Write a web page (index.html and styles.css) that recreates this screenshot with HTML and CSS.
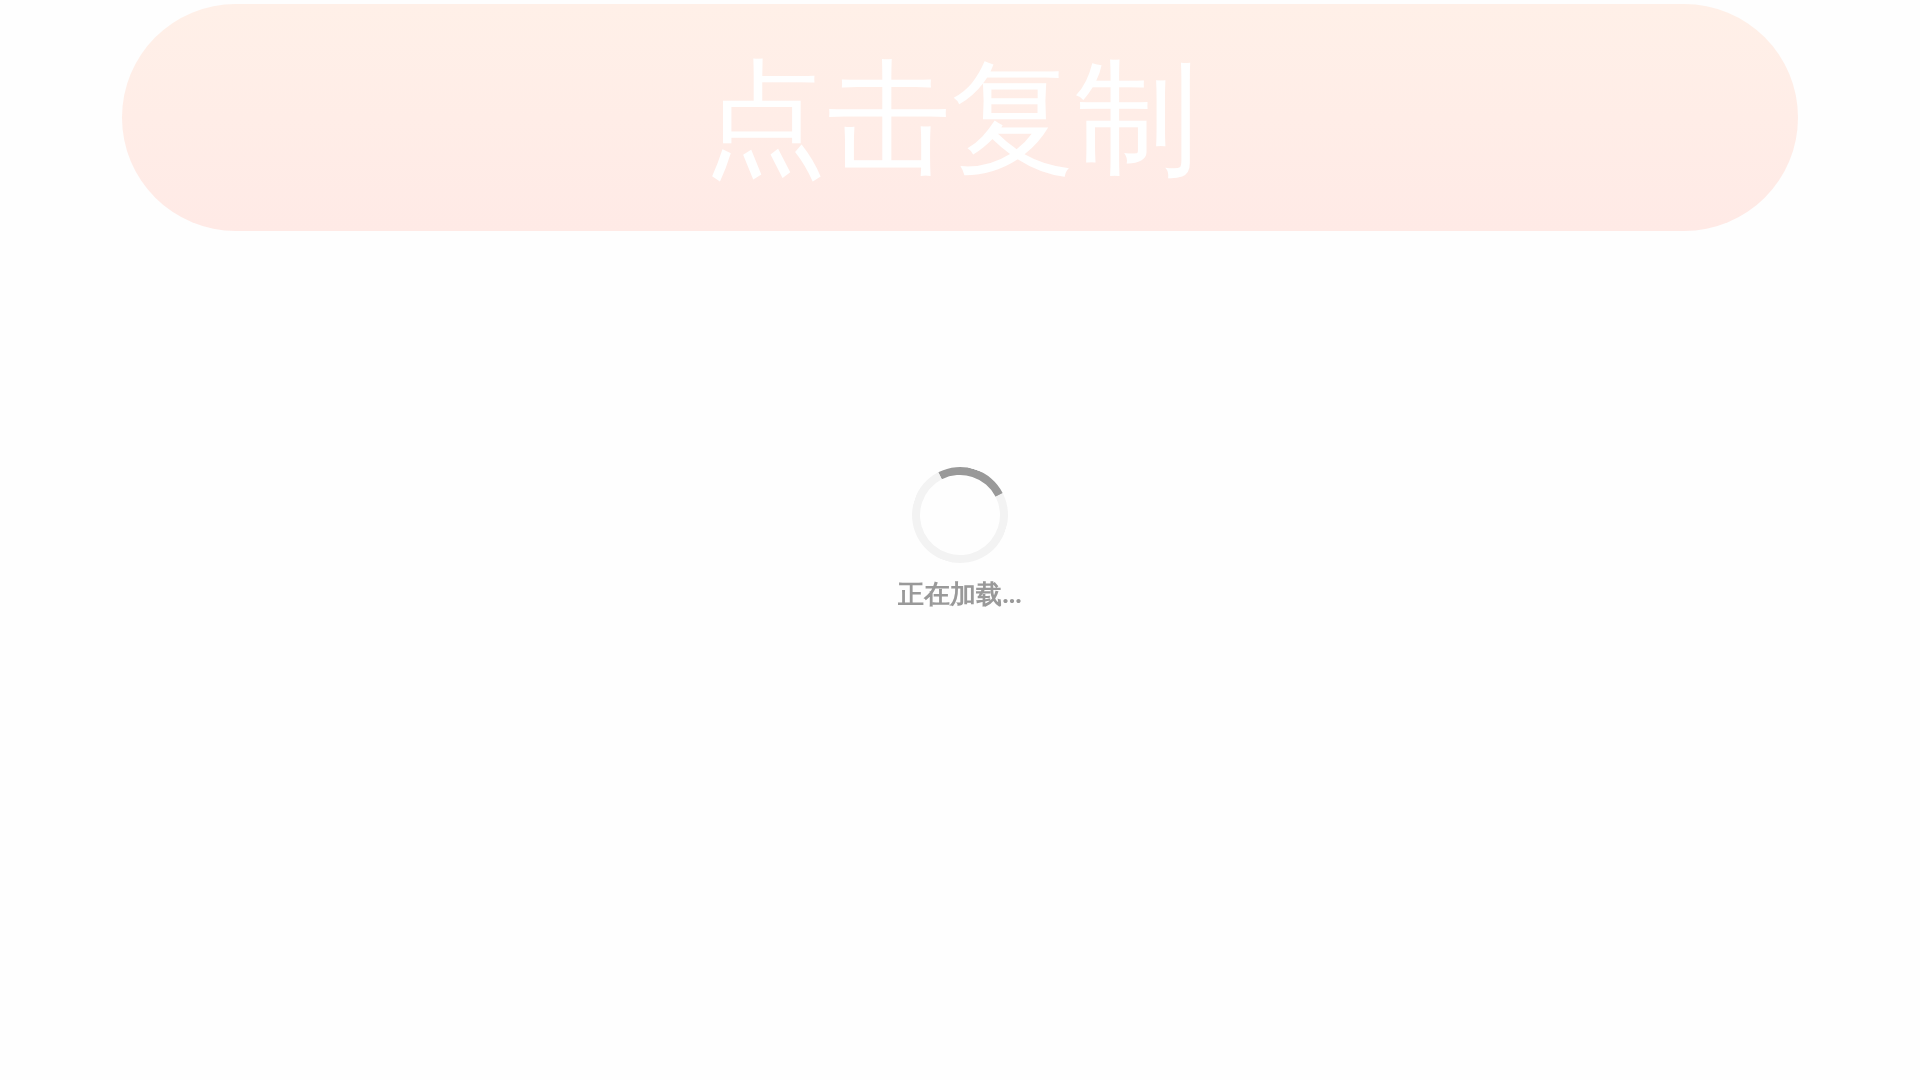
FILE: index.html
```
<!DOCTYPE html>
<html lang="en">
<head>
  <meta charset="UTF-8" />
  <meta name="viewport" content="width=device-width, initial-scale=1.0"/>
  <title>点击复制</title>

  <link rel="stylesheet" href="styles.css">
</head>
<body>
  <main class="copy-box">
    <button type="button" class="copy-btn">点击复制</button>
  </main>

  <!-- Loading mask -->
  <div class="loading" role="status">
    <div class="spinner"></div>
    <p class="loading-text">正在加载...</p>
  </div>
</body>
</html>
```
FILE: styles.css
```
* {
  box-sizing: border-box;
  margin: 0;
  padding: 0;
}

body {
  font-family: 'Liberation Sans', 'WenQuanYi Zen Hei', 'Noto Sans CJK SC', sans-serif;
  background-color: #fefefe;
}

.copy-box {
  display: flex;
  padding: 4px 122px;
}

.copy-btn {
  flex: 1;
  height: 227px;
  padding-right: 18px;
  border: none;
  border-radius: 114px;
  background: linear-gradient(#fff0e8, #ffeae6);
  color: #fff;
  font-family: inherit;
  font-size: 124px;
  line-height: 180px;
  cursor: pointer;
}

/* Loading */
.loading {
  position: fixed;
  inset: 0;
  display: flex;
  flex-direction: column;
  align-items: center;
  justify-content: center;
  gap: 14px;
}

.spinner {
  width: 96px;
  height: 96px;
  border: 8px solid #f3f3f3;
  border-top-color: #999;
  border-radius: 50%;
  transform: rotate(18deg);
}

.loading-text {
  color: #999;
  font-family: 'Liberation Serif', serif;
  font-size: 26px;
  font-weight: bold;
  line-height: 36px;
}
```
